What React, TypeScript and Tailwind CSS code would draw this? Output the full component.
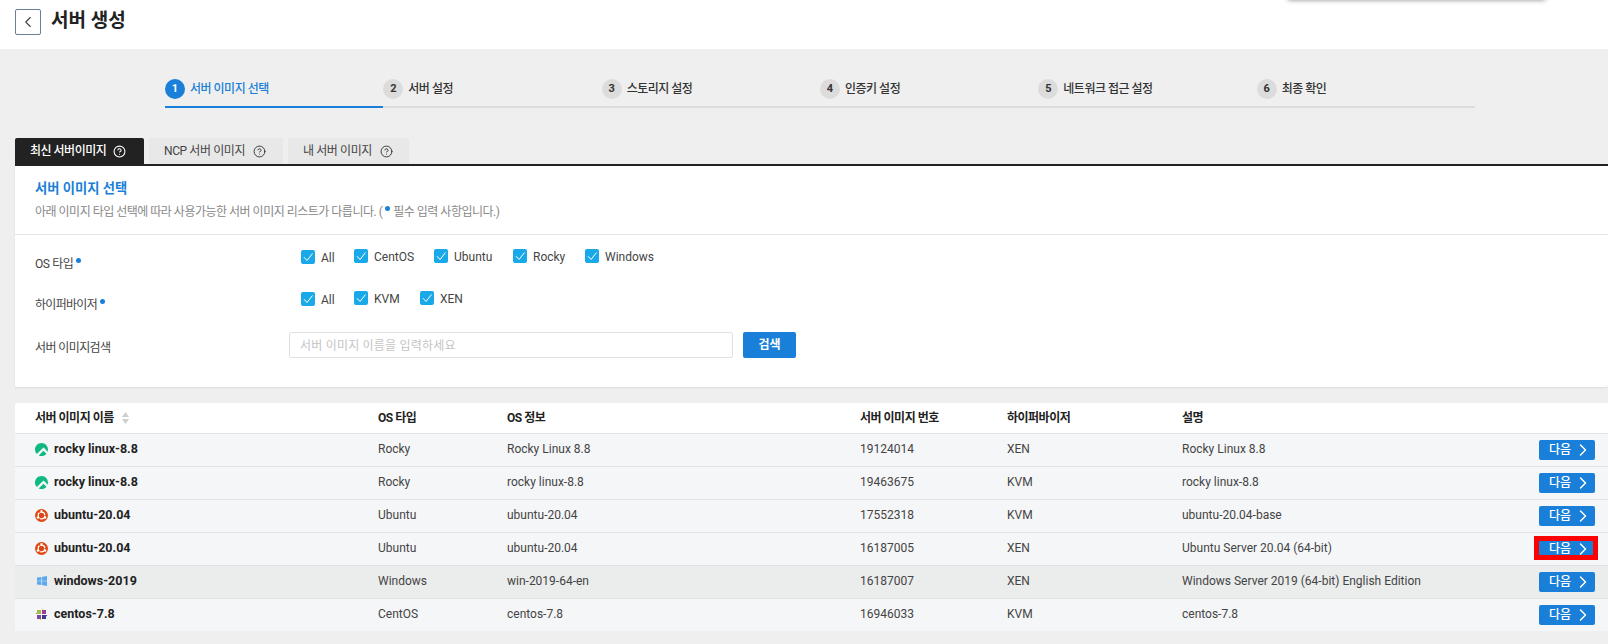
import { ChevronLeft, ChevronRight, CircleHelp } from "lucide-react";
import { SiRockylinux } from "react-icons/si";

const Dot = () => <span className="inline-block w-[5px] h-[5px] rounded-full bg-[#1a7fd8] align-top mt-[2px] mx-[3px]" />;

const Check = ({ label, low }: { label: string; low?: boolean }) => (
  <div className={`flex items-start gap-[6px] ${low ? "mt-px" : ""}`}>
    <span className="w-[14px] h-[14px] rounded-[2px] bg-[#1aa9e8] flex items-center justify-center shrink-0">
      <svg width="12" height="12" viewBox="0 0 12 12" fill="none"><path d="M2 6.2 L5 9.5 L10.5 2.5" stroke="#fff" strokeWidth="1" /></svg>
    </span>
    <span className="text-[12px] leading-[16px] text-[#444]">{label}</span>
  </div>
);

const Rocky = () => <SiRockylinux size={13} color="#10b981" />;
const Ubuntu = () => (
  <svg width="13" height="13" viewBox="0 0 13 13">
    <circle cx="6.5" cy="6.5" r="6.5" fill="#dd4814" />
    <circle cx="6.5" cy="6.5" r="3.3" fill="none" stroke="#fff" strokeWidth="1.3" />
    <path d="M9.4 6.5 H11.5 M5 9 L4 10.8 M5 4 L4 2.2" stroke="#dd4814" strokeWidth="0.9" />
    <circle cx="6.5" cy="2.1" r="1.1" fill="#fff" />
    <circle cx="2.7" cy="8.7" r="1.1" fill="#fff" />
    <circle cx="10.3" cy="8.7" r="1.1" fill="#fff" />
  </svg>
);
const Windows = () => (
  <svg width="10" height="10" viewBox="0 0 10 10" fill="#5aa9ee">
    <path d="M0 1.6 L4.2 1 V4.7 H0 Z" />
    <path d="M4.8 0.9 L10 0 V4.7 H4.8 Z" />
    <path d="M0 5.3 H4.2 V9 L0 8.4 Z" />
    <path d="M4.8 5.3 H10 V10 L4.8 9.1 Z" />
  </svg>
);
const CentOS = () => (
  <svg width="13" height="13" viewBox="0 0 13 13">
    <path d="M6.5 0 L9 2.5 V6 H6.9 V0.4 Z" fill="#e6c640" />
    <path d="M13 6.5 L10.5 9 H7 V6.9 H12.6 Z" fill="#8c3a8f" />
    <path d="M6.5 13 L4 10.5 V7 H6.1 V12.6 Z" fill="#e6c640" />
    <path d="M0 6.5 L2.5 4 H6 V6.1 H0.4 Z" fill="#8fae2f" />
    <path d="M2 2 H6 V6 H2 Z" fill="#a9b84a" />
    <path d="M7 2 H11 V6 H7 Z" fill="#9a3f98" />
    <path d="M7 7 H11 V11 H7 Z" fill="#3c3a8f" />
    <path d="M2 7 H6 V11 H2 Z" fill="#7d4aa0" />
  </svg>
);

const rows = [
  { icon: <Rocky />, name: "rocky linux-8.8", os: "Rocky", info: "Rocky Linux 8.8", id: "19124014", hv: "XEN", desc: "Rocky Linux 8.8" },
  { icon: <Rocky />, name: "rocky linux-8.8", os: "Rocky", info: "rocky linux-8.8", id: "19463675", hv: "KVM", desc: "rocky linux-8.8" },
  { icon: <Ubuntu />, name: "ubuntu-20.04", os: "Ubuntu", info: "ubuntu-20.04", id: "17552318", hv: "KVM", desc: "ubuntu-20.04-base" },
  { icon: <Ubuntu />, name: "ubuntu-20.04", os: "Ubuntu", info: "ubuntu-20.04", id: "16187005", hv: "XEN", desc: "Ubuntu Server 20.04 (64-bit)", marked: true },
  { icon: <Windows />, name: "windows-2019", os: "Windows", info: "win-2019-64-en", id: "16187007", hv: "XEN", desc: "Windows Server 2019 (64-bit) English Edition", hover: true },
  { icon: <CentOS />, name: "centos-7.8", os: "CentOS", info: "centos-7.8", id: "16946033", hv: "KVM", desc: "centos-7.8" },
];

const steps = ["서버 이미지 선택", "서버 설정", "스토리지 설정", "인증키 설정", "네트워크 접근 설정", "최종 확인"];
const cols = "grid grid-cols-[343px_129px_353px_147px_175px_1fr] items-center pl-5 pr-[13px]";

export default function App() {
  return (
    <div className="relative h-[644px] w-[1608px] overflow-hidden bg-[#efefef] font-['Roboto','Noto_Sans_CJK_KR',sans-serif] text-[12px] text-[#444]">
      <div className="absolute left-[1288px] top-[-10px] w-[257px] h-[10px] bg-white shadow-[0_0_5px_rgba(0,0,0,0.45)]" />
      <header className="h-[49px] bg-white flex items-start pl-[15px] pt-[9px]">
        <button className="w-[26px] h-[26px] border border-[#6b7f99] rounded-[2px] flex items-center justify-center bg-white">
          <ChevronLeft size={18} strokeWidth={1.5} color="#444" />
        </button>
        <h1 className="ml-[10px] text-[19px] leading-[24px] font-bold text-[#222]">서버 생성</h1>
      </header>

      <div className="ml-[165px] mt-[30px] w-[1310px] grid grid-cols-6">
        {steps.map((s, i) => (
          <div key={s} className={`h-[29px] flex items-start gap-[5px] border-b-2 ${i === 0 ? "border-[#1a7fd8]" : "border-[#dcdcdc]"}`}>
            <span className={`w-5 h-5 rounded-full flex items-center justify-center text-[11px] font-bold ${i === 0 ? "bg-[#1a7fd8] text-white" : "bg-[#dcdcdc] text-[#333]"}`}>{i + 1}</span>
            <span className={`text-[12px] leading-[21px] font-medium tracking-[-0.5px] ${i === 0 ? "text-[#1a7fd8]" : "text-[#333]"}`}>{s}</span>
          </div>
        ))}
      </div>

      <div className="ml-[15px] mt-[30px] flex gap-[5px] h-[26px]">
        <div className="w-[129px] bg-[#222] text-white rounded-t-[2px] flex items-center pl-[15px] gap-[7px] font-medium">
          <span className="tracking-[-0.5px]">최신 서버이미지</span><CircleHelp size={13} strokeWidth={2} />
        </div>
        <div className="w-[134px] bg-[#e8e8e8] rounded-t-[2px] flex items-center pl-[15px] gap-[8px] text-[#444]">
          <span className="tracking-[-0.4px]">NCP 서버 이미지</span><CircleHelp size={13} strokeWidth={1.75} color="#333" />
        </div>
        <div className="w-[121px] bg-[#e8e8e8] rounded-t-[2px] flex items-center pl-[15px] gap-[8px] text-[#444]">
          <span className="tracking-[-0.4px]">내 서버 이미지</span><CircleHelp size={13} strokeWidth={1.75} color="#333" />
        </div>
      </div>

      <section className="ml-[15px] bg-white border-t-2 border-[#222] pb-[29px] shadow-[0_1px_2px_rgba(0,0,0,0.08)] rounded-b-[2px]">
        <div className="h-[69px] pl-5 pt-[13px] border-b border-[#e4e4e4]">
          <h2 className="text-[13.3px] leading-[20px] font-bold text-[#1a7fd8]">서버 이미지 선택</h2>
          <p className="mt-[5px] text-[12px] leading-[16px] text-[#888] tracking-[-0.5px]">
            아래 이미지 타입 선택에 따라 사용가능한 서버 이미지 리스트가 다릅니다. (<Dot />필수 입력 사항입니다.)
          </p>
        </div>

        <div className="flex h-[42px] pl-5">
          <div className="w-[266px] pt-[21px] leading-[16px] tracking-[-0.4px]">OS 타입<Dot /></div>
          <div className="pt-[14px] flex items-start">
            <div className="w-[53px]"><Check label="All" low /></div>
            <div className="w-[80px]"><Check label="CentOS" /></div>
            <div className="w-[79px]"><Check label="Ubuntu" /></div>
            <div className="w-[72px]"><Check label="Rocky" /></div>
            <Check label="Windows" />
          </div>
        </div>
        <div className="flex h-[55px] pl-5">
          <div className="w-[266px] pt-[20px] leading-[16px] tracking-[-0.7px]">하이퍼바이저<Dot /></div>
          <div className="pt-[14px] flex items-start">
            <div className="w-[53px]"><Check label="All" low /></div>
            <div className="w-[66px]"><Check label="KVM" /></div>
            <Check label="XEN" />
          </div>
        </div>
        <div className="flex h-[26px] pl-5">
          <div className="w-[254px] pt-[8px] leading-[16px] tracking-[-0.6px]">서버 이미지검색</div>
          <input readOnly placeholder="서버 이미지 이름을 입력하세요" className="w-[444px] h-[26px] border border-[#e0e0e0] rounded-[2px] px-[10px] pt-px text-[12px] tracking-[0.2px] placeholder:text-[#c4c4c4] outline-none" />
          <button className="ml-[10px] w-[53px] h-[26px] bg-[#1a7fd8] text-white font-bold rounded-[2px] text-[12px]">검색</button>
        </div>
      </section>

      <section className="ml-[15px] mt-4 bg-white rounded-[2px] overflow-hidden">
        <div className={`${cols} h-[30px] font-bold text-[#222] tracking-[-0.5px]`}>
          <div className="flex items-center gap-[8px]">
            <span>서버 이미지 이름</span>
            <svg width="7" height="12" viewBox="0 0 7 12" fill="#cfcfcf"><path d="M3.5 0 L7 5 H0 Z" /><path d="M3.5 12 L7 7 H0 Z" /></svg>
          </div>
          <div>OS 타입</div>
          <div>OS 정보</div>
          <div>서버 이미지 번호</div>
          <div>하이퍼바이저</div>
          <div>설명</div>
        </div>
        {rows.map((r, i) => (
          <div key={i} className={`${cols} h-[33px] border-t border-[#e0e2e6] ${r.hover ? "bg-[#ebecec]" : "bg-[#f5f6f8]"}`}>
            <div className="flex items-center gap-[6px] font-bold text-[#222] text-[12.5px] pb-[2px]">
              <span className="w-[13px] flex justify-center">{r.icon}</span>{r.name}
            </div>
            <div className="pb-[2px]">{r.os}</div>
            <div className="pb-[2px]">{r.info}</div>
            <div className="pb-[2px]">{r.id}</div>
            <div className="pb-[2px]">{r.hv}</div>
            <div className="flex items-center justify-between">
              <span className="pb-[2px]">{r.desc}</span>
              <span className="relative">
                <button className="w-[56px] h-[20px] bg-[#1a7fd8] text-white rounded-[2px] flex items-center justify-between pl-[10px] pr-[2px] font-medium text-[12px]">
                  다음<ChevronRight size={20} strokeWidth={1.75} />
                </button>
                {r.marked && <span className="absolute left-[-5px] top-[-3px] w-[64px] h-[24px] border-[5px] border-[#ff0000]" />}
              </span>
            </div>
          </div>
        ))}
      </section>
    </div>
  );
}
